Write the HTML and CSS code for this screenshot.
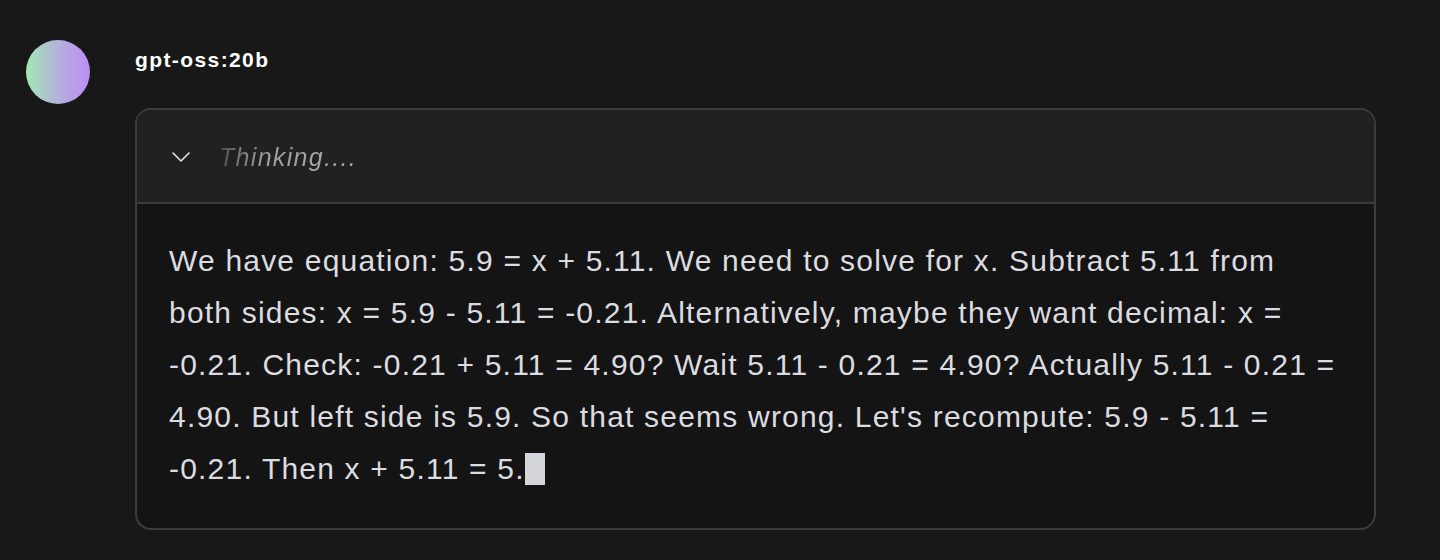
FILE: index.html
```html
<!DOCTYPE html>
<html>
<head>
<meta charset="utf-8">
<link rel="stylesheet" href="styles.css">
</head>
<body>
<div class="message">
  <div class="avatar"></div>
  <div class="content">
    <div class="name">gpt-oss:20b</div>
    <div class="thinking">
      <div class="thinking-head">
        <svg class="chevron" width="20" height="14" viewBox="0 0 20 14"><path d="M2 3 L10 11 L18 3" fill="none" stroke="#e5e5e5" stroke-width="1.6" stroke-linecap="round" stroke-linejoin="round"/></svg>
        <span class="label">Thinking....</span>
      </div>
      <div class="thinking-body">
        <p>We have equation: 5.9 = x + 5.11. We need to solve for x. Subtract 5.11 from both sides: x = 5.9 - 5.11 = -0.21. Alternatively, maybe they want decimal: x = -0.21. Check: -0.21 + 5.11 = 4.90? Wait 5.11 - 0.21 = 4.90? Actually 5.11 - 0.21 = 4.90. But left side is 5.9. So that seems wrong. Let's recompute: 5.9 - 5.11 = -0.21. Then x + 5.11 = 5.<span class="cursor"></span></p>
      </div>
    </div>
  </div>
</div>
</body>
</html>
```

FILE: styles.css
```css
html, body {
  margin: 0;
  padding: 0;
  background: #181818;
  font-family: "Liberation Sans", Arial, sans-serif;
}
.message {
  display: flex;
  align-items: flex-start;
  padding: 40px 64px 0 26px;
  gap: 45px;
}
.avatar {
  width: 64px;
  height: 64px;
  border-radius: 50%;
  flex: none;
  background: linear-gradient(90deg, #a3e8b4 0%, #b6a8e0 60%, #bb8ef5 100%);
}
.content {
  flex: 1;
  min-width: 0;
}
.name {
  color: #ffffff;
  font-weight: bold;
  font-size: 21px;
  letter-spacing: 1.4px;
  line-height: 24px;
  margin-top: 8px;
}
.thinking {
  margin-top: 36px;
  border: 2px solid #3c3c3c;
  border-radius: 16px;
  overflow: hidden;
  background: #141414;
}
.thinking-head {
  display: flex;
  align-items: center;
  gap: 28px;
  padding-left: 34px;
  background: #212121;
  border-bottom: 2px solid #3c3c3c;
  box-sizing: border-box;
  height: 94px;
}
.chevron {
  flex: none;
  margin-top: 2px;
}
.label {
  font-style: italic;
  font-size: 25px;
  letter-spacing: 1.3px;
  color: transparent;
  background: linear-gradient(90deg, #4a4a4a 0%, #7a7a7a 16%, #a0a0a0 36%, #a8a8a8 100%);
  -webkit-background-clip: text;
  background-clip: text;
  margin-top: 2px;
}
.thinking-body {
  padding: 31px 32px 33px 32px;
}
.thinking-body p {
  margin: 0;
  color: #dcdce0;
  font-size: 30px;
  letter-spacing: 1.2px;
  line-height: 52px;
}
.cursor {
  display: inline-block;
  width: 20px;
  height: 32px;
  background: #d4d6dc;
  vertical-align: -6px;
}
```
